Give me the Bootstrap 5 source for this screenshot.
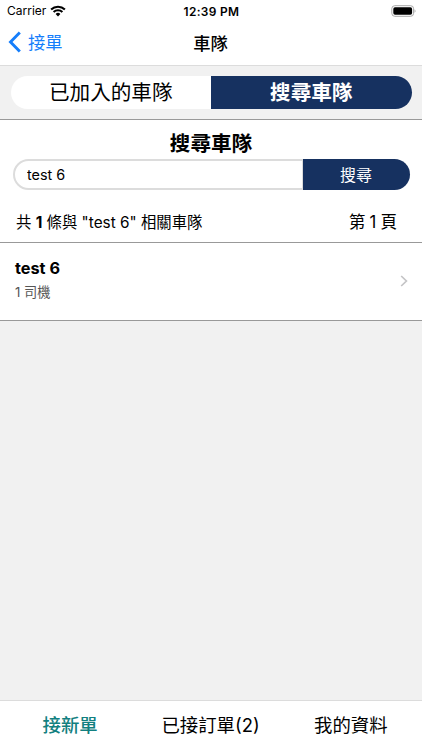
<!DOCTYPE html>
<html lang="zh-Hant">
<head>
<meta charset="utf-8">
<meta name="viewport" content="width=device-width, initial-scale=1">
<title>車隊</title>
<link href="https://cdn.jsdelivr.net/npm/bootstrap@5.3.0/dist/css/bootstrap.min.css" rel="stylesheet">
<style>
body{font-family:Inter,"Noto Sans CJK TC",sans-serif;background:#f1f1f1;color:#000;line-height:1}
.screen{height:750px;overflow:hidden}
.topbar{height:66px;border-bottom:1px solid #dcdcdc}
.status{height:22px;font-size:12px;padding:0 6px 0 7px}
.status .clock{font-weight:600;font-size:11.9px;letter-spacing:.35px;padding-top:2px}
.titlebar{height:43px;font-size:17.3px;padding-left:8px;padding-right:9px}
.back{color:#157efb;gap:6px}
.page-title{font-weight:500}
.tabs-strip{height:54px;padding:0 10.5px 1px;border-bottom:1px solid #999}
.seg{height:33px;font-size:20.6px;border:0;padding:2px 0 0}
.seg-l{background:#fff;border-radius:17px 0 0 17px}
.seg-r{background:#163160;color:#fff;font-weight:700;border-radius:0 17px 17px 0}
.finder{height:123px;border-bottom:1px solid #999}
.finder h1{font-size:20.6px;font-weight:700;line-height:24px;padding-top:12px;height:39px}
.field-row{height:31px;margin:0 12.5px}
.field{border:2px solid #dcdcdc;border-right-width:1px;border-radius:16px 0 0 16px;font-size:14.4px;padding:0 12.5px;color:#000;background:#fff;min-width:0;outline:0}
.go{width:107px;background:#163160;color:#fff;border:0;border-radius:0 16px 16px 0;font-size:16px;padding:0}
.summary{height:52px;font-size:15.35px;padding:13px 25px 0 16px}
.summary .pageno{font-size:16.6px;word-spacing:-.5px}
.result{height:78px;border-bottom:1px solid #999;padding:0 14px 0 15px}
.result h2{font-size:16.3px;font-weight:650;line-height:20px;margin:0 0 5px}
.result p{font-size:13.2px;line-height:18px;color:#555;margin:0 0 5px}
.result svg{margin-bottom:2px}
.bottombar{height:50px;border-top:1px solid #dcdcdc;font-size:18.4px;padding-right:1px}
.active-item{color:#128080;font-weight:500}
</style>
<script src="https://cdn.jsdelivr.net/npm/bootstrap@5.3.0/dist/js/bootstrap.bundle.min.js"></script>
</head>
<body>
<div class="screen d-flex flex-column">
  <header class="topbar bg-white">
    <div class="status row g-0 align-items-center">
      <div class="col d-flex align-items-center gap-1"><span>Carrier</span>
        <svg width="16" height="12" viewBox="0 0 16 12"><g fill="none" stroke="#000" stroke-width="2.1"><path d="M1.1 4.5A9.9 9.9 0 0 1 14.9 4.5M3.6 7A6.3 6.3 0 0 1 12.4 7"/></g><path d="M8 11.5 5.6 9A3.5 3.5 0 0 1 10.4 9Z"/></svg>
      </div>
      <div class="col-auto clock">12:39 PM</div>
      <div class="col d-flex justify-content-end">
        <svg width="25" height="12" viewBox="0 0 25 12"><rect x=".8" y=".7" width="21.8" height="10.6" rx="3" fill="#fff" stroke="#a8a8a8"/><rect x="2.3" y="2.2" width="18.8" height="7.6" rx="1.7"/><path d="M23.6 4.2Q25.4 6 23.6 7.8Z" fill="#999"/></svg>
      </div>
    </div>
    <div class="titlebar row g-0 align-items-center">
      <div class="col"><a href="#" class="back d-inline-flex align-items-center text-decoration-none">
        <svg width="14" height="22" viewBox="0 0 14 22"><path d="M11.8 1.5 2.5 11l9.3 9.5" fill="none" stroke="#157efb" stroke-width="2.9"/></svg><span>接單</span></a></div>
      <div class="col-auto page-title">車隊</div>
      <div class="col"></div>
    </div>
  </header>
  <div class="tabs-strip d-flex align-items-center">
    <button class="seg seg-l w-50">已加入的車隊</button>
    <button class="seg seg-r w-50">搜尋車隊</button>
  </div>
  <section class="finder bg-white">
    <h1 class="text-center m-0">搜尋車隊</h1>
    <div class="field-row d-flex">
      <input class="field flex-grow-1" type="text" value="test 6" aria-label="搜尋車隊">
      <button class="go flex-shrink-0">搜尋</button>
    </div>
    <div class="summary d-flex justify-content-between align-items-center">
      <span class="count">共 <b>1</b> 條與 "test 6" 相關車隊</span><span class="pageno">第 1 頁</span>
    </div>
  </section>
  <a href="#" class="result bg-white d-flex align-items-center justify-content-between text-decoration-none text-black">
    <div><h2>test 6</h2><p>1 司機</p></div>
    <svg width="8" height="12" viewBox="0 0 8 12"><path d="M1.2 1 6.4 6 1.2 11" fill="none" stroke="#c4c4c6" stroke-width="1.7"/></svg>
  </a>
  <nav class="bottombar bg-white mt-auto row g-0 text-center align-items-center">
    <div class="col active-item">接新單</div>
    <div class="col">已接訂單(2)</div>
    <div class="col">我的資料</div>
  </nav>
</div>
</body>
</html>
